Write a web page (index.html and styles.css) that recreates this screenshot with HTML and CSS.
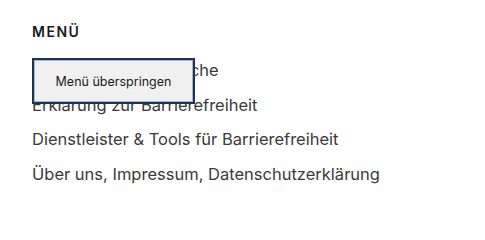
FILE: index.html
```html
<!DOCTYPE html>
<html lang="de">
<head>
<meta charset="utf-8">
<title>Menü</title>
<link rel="stylesheet" href="styles.css">
</head>
<body>
<nav class="menu">
  <h2 class="menu-title">MENÜ</h2>
  <div class="menu-body">
    <a class="skip-link" href="#content">Menü überspringen</a>
    <ul class="menu-list">
      <li><a href="#">Alle Beiträge und Suche</a></li>
      <li><a href="#">Erklärung zur Barrierefreiheit</a></li>
      <li><a href="#">Dienstleister &amp; Tools für Barrierefreiheit</a></li>
      <li><a href="#">Über uns, Impressum, Datenschutzerklärung</a></li>
    </ul>
  </div>
</nav>
</body>
</html>
```
FILE: styles.css
```css
html, body {
  margin: 0;
  padding: 0;
  background: #ffffff;
}
body {
  font-family: Inter, "Noto Sans", sans-serif;
  color: #3a3a3a;
}
.menu {
  padding: 24px 32px 0 32px;
}
.menu-title {
  margin: 0;
  font-size: 14px;
  font-weight: 600;
  letter-spacing: 1.5px;
  line-height: 16px;
  color: #1a1a1a;
}
.menu-body {
  position: relative;
  margin-top: 13px;
}
.menu-list {
  list-style: none;
  margin: 0;
  padding: 0;
}
.menu-list li {
  font-size: 16.5px;
  line-height: 34.6px;
}
.menu-list a {
  color: #3a3a3a;
  text-decoration: none;
}
.skip-link {
  position: absolute;
  left: 0;
  top: 5px;
  width: 163px;
  height: 46px;
  box-sizing: border-box;
  display: flex;
  align-items: center;
  justify-content: center;
  background: #f0f0f0;
  border: 2px solid #1d3351;
  box-shadow: inset 0 0 0 1px #9fb6d6;
  color: #1a1a1a;
  font-size: 12.5px;
  text-decoration: none;
  z-index: 2;
}
```
